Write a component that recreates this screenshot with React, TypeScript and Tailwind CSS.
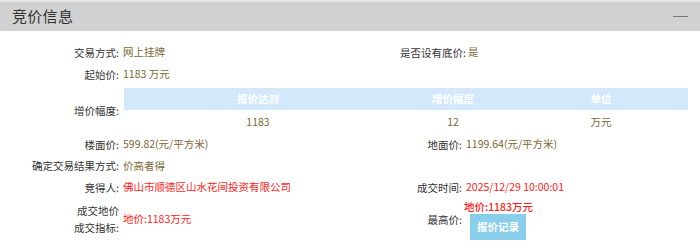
import React from 'react';

const font = { fontFamily: '"Noto Sans CJK SC", "Noto Sans", sans-serif' };

const Label = ({ children, className = '' }: { children: React.ReactNode; className?: string }) => (
  <div className={`text-right text-[#333] leading-[17px] ${className}`}>{children}</div>
);

const Value = ({ children, className = '' }: { children: React.ReactNode; className?: string }) => (
  <div className={`pl-[4px] text-[#7a6836] ${className}`}>{children}</div>
);

export default function App() {
  return (
    <div className="w-[700px] h-[249px] overflow-hidden bg-white text-[10.5px]" style={font}>
      {/* header */}
      <div className="border-t-2 border-[#e8e8e8] h-[31px] bg-[#d1d1d1] flex items-center justify-between pl-[12px] pr-[12px]">
        <span className="text-[15px] text-[#333] tracking-[0.3px]">竞价信息</span>
        <div className="w-[15px] h-[1.5px] bg-[#777]" />
      </div>

      <div className="pt-[10px] grid grid-cols-[119px_273px_70px_1fr] items-center">
        <Label className="h-[22px] flex items-center justify-end">交易方式:</Label>
        <Value>网上挂牌</Value>
        <Label className="h-[22px] flex items-center justify-end -mr-[4px]">是否设有底价:</Label>
        <Value className="pl-[6px]">是</Value>

        <Label className="h-[22px] flex items-center justify-end">起始价:</Label>
        <Value className="col-span-3">1183 万元</Value>

        <Label className="mt-[3px]">增价幅度:</Label>
        <div className="col-span-3 mt-[3px] ml-[5px] mr-[12px] grid grid-cols-[268px_122px_1fr] text-center">
          <div className="h-[22px] bg-[#d3e8fb] text-white font-bold flex items-center justify-center">报价达到</div>
          <div className="h-[22px] bg-[#d3e8fb] text-white font-bold flex items-center justify-center">增价幅度</div>
          <div className="h-[22px] bg-[#d3e8fb] text-white font-bold flex items-center justify-center">单位</div>
          <div className="h-[23px] flex items-center justify-center text-[#7a6836]">1183</div>
          <div className="h-[23px] flex items-center justify-center text-[#7a6836]">12</div>
          <div className="h-[23px] flex items-center justify-center text-[#7a6836]">万元</div>
        </div>

        <Label className="h-[22px] flex items-center justify-end">楼面价:</Label>
        <Value>599.82(元/平方米)</Value>
        <Label className="h-[22px] flex items-center justify-end">地面价:</Label>
        <Value>1199.64(元/平方米)</Value>

        <Label className="h-[21px] flex items-center justify-end">确定交易结果方式:</Label>
        <Value className="col-span-3">价高者得</Value>

        <Label className="h-[22px] flex items-center justify-end">竞得人:</Label>
        <Value className="text-[#ff1a1a]">佛山市顺德区山水花间投资有限公司</Value>
        <Label className="h-[22px] flex items-center justify-end">成交时间:</Label>
        <Value className="text-[#ff1a1a] pl-[2px]">2025/12/29 10:00:01</Value>

        <Label>
          <div>成交地价</div>
          <div>成交指标:</div>
        </Label>
        <Value className="text-[#ff1a1a]">地价:1183万元</Value>
        <Label>最高价:</Label>
        <div className="pl-[2px] pt-[2px] flex flex-col items-start">
          <span className="text-[#ff1a1a] font-medium leading-[13px]">地价:1183万元</span>
          <button className="ml-[6px] mt-[1px] w-[56px] h-[26px] bg-[#89cfeb] text-white font-bold flex items-center justify-center">
            报价记录
          </button>
        </div>
      </div>
    </div>
  );
}
